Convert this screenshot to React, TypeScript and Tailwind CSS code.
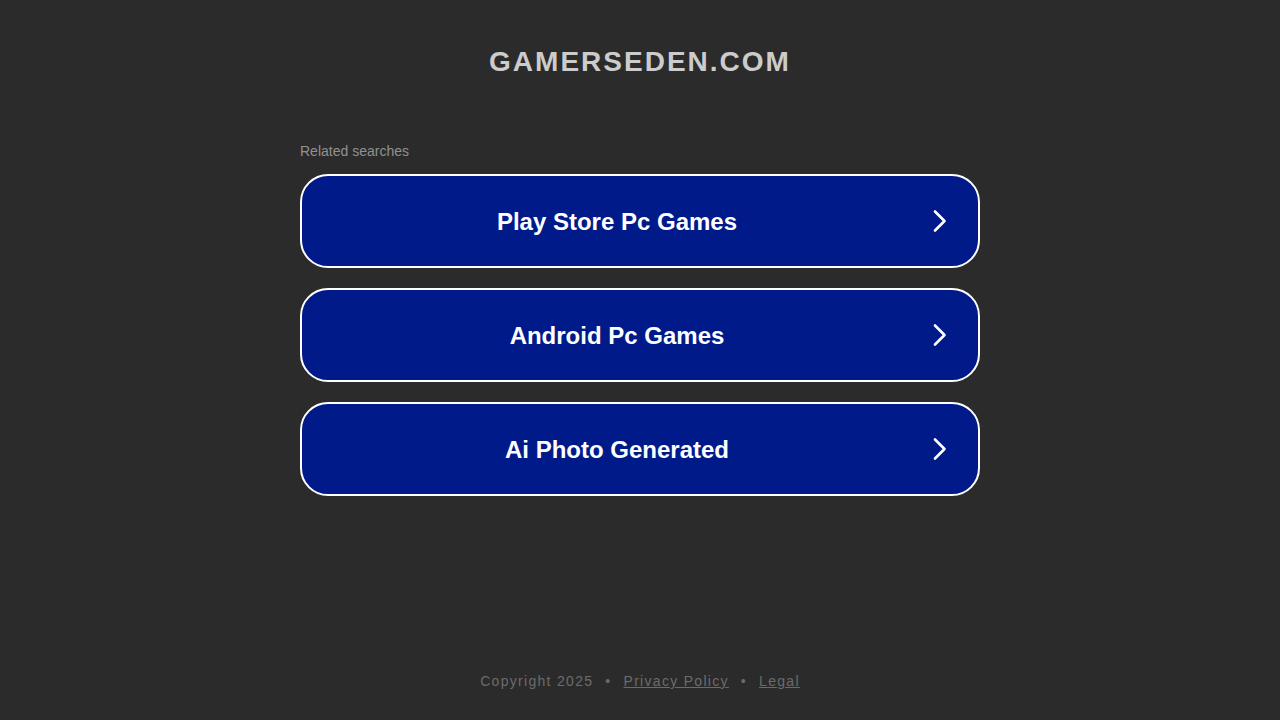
import React from "react";

const searches = ["Play Store Pc Games", "Android Pc Games", "Ai Photo Generated"];

function Chevron() {
  return (
    <svg width="16" height="24" viewBox="0 0 16 24" fill="none" aria-hidden="true">
      <path d="M3 2.5 L12.5 12 L3 21.5" stroke="white" strokeWidth="2.6" strokeLinecap="round" strokeLinejoin="round" />
    </svg>
  );
}

export default function App() {
  return (
    <div className="flex min-h-screen flex-col bg-[#2b2b2b] font-['Liberation_Sans',Arial,sans-serif]">
      <main className="mx-auto w-[680px] flex-1">
        <h1 className="mt-[45px] text-center text-[28px] font-bold leading-[34px] tracking-[2px] text-[#cccccc]">
          GAMERSEDEN.COM
        </h1>

        <p className="mt-[64px] text-[14px] leading-[16px] text-[#919191]">Related searches</p>

        {/* related search buttons */}
        <div className="mt-[15px] flex flex-col gap-[20px]">
          {searches.map((label) => (
            <a
              key={label}
              href="#"
              className="flex h-[94px] items-center rounded-[28px] border-2 border-white bg-[#011a8a] pr-[30px] text-white"
            >
              <span className="flex-1 pt-[2px] text-center text-[24px] font-bold">{label}</span>
              <Chevron />
            </a>
          ))}
        </div>
      </main>

      <footer className="pb-[29px] text-center text-[14px] leading-[20px] tracking-[1.3px] text-[#6b6b6b]">
        <span>Copyright 2025</span>
        <span className="mx-[12px]">•</span>
        <a href="#" className="underline">Privacy Policy</a>
        <span className="mx-[12px]">•</span>
        <a href="#" className="underline">Legal</a>
      </footer>
    </div>
  );
}
